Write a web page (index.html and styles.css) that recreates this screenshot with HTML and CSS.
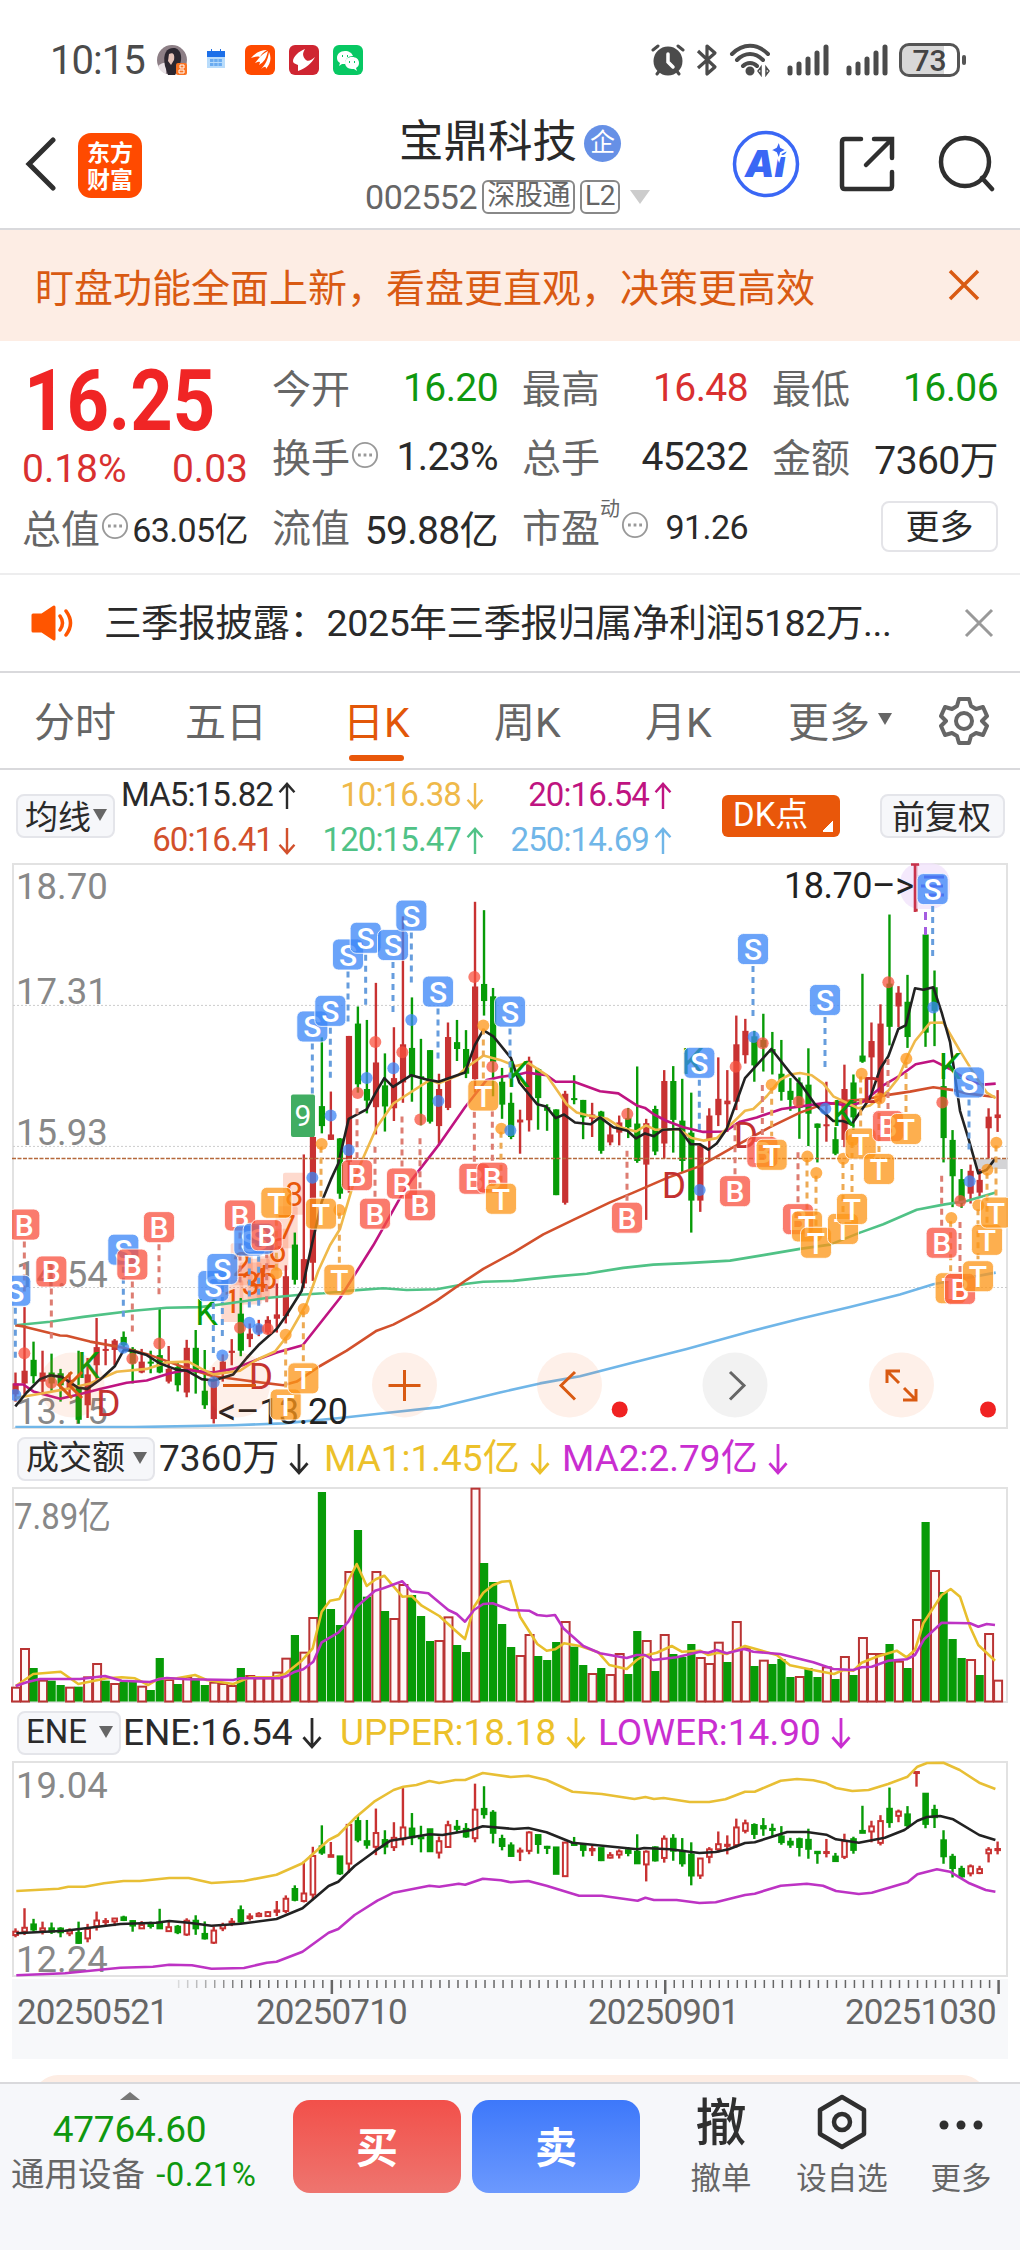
FILE: index.html
```html
<!DOCTYPE html>
<html lang="zh-CN">
  <head>
    <meta charset="UTF-8" />
    <meta name="viewport" content="width=device-width, initial-scale=1.0" />
    <title>宝鼎科技 002552</title>
    <link rel="stylesheet" href="styles.css">
  </head>
  <body>
    <svg class="defs">
      <symbol id="up" viewBox="0 0 20 30"><path d="M10 29V2M2 11l8-9 8 9" /></symbol>
      <symbol id="down" viewBox="0 0 20 30"><path d="M10 1v27M2 19l8 9 8-9" /></symbol>
      <symbol id="more-dots" viewBox="0 0 30 30">
        <circle cx="15" cy="15" r="13" />
        <path d="M7.5 15h3M13.500 15h3M19.500 15h3" stroke-width="3" />
      </symbol>
      <symbol id="signal" viewBox="0 0 42 32">
        <path d="M3 24v5M12 20v9M21 15v14M30 9v20M39 3v26" />
      </symbol>
    </svg>

    <div class="status">
      <span class="clock">10:15</span>
      <svg class="apps" width="212" height="32" viewBox="0 0 212 32">
        <circle cx="16" cy="16" r="15" fill="#8d7f86" />
        <path d="M2 22q5-4 8-3v11q-6-2-8-8z" fill="#e9e2e6" />
        <path d="M9 22C6 8 12 3 19 4c7 2 7 11 5 16l-5 11h-7z" fill="#2c2730" />
        <path d="M13 10c4-2 6 0 5 6l-3 5-3-4z" fill="#e5c3b9" />
        <rect x="20" y="19" width="11" height="12" rx="2" fill="#fa7322" />
        <path d="M24 21h4v3h-4zM23 26h5v3h-5z" fill="none" stroke="#fff" />
        <rect x="51" y="8" width="18" height="16" fill="#b9dcfb" />
        <path d="M51 7h18v6H51zM55 5h1v3h-1zM64 5h1v3h-1z" fill="#1c6fe8" />
        <path d="M54 16.500h12M54 20.500h12" stroke="#6aabf0" stroke-width="3" stroke-dasharray="3.500 .700" />
        <rect x="89" y="1" width="30" height="30" rx="6" fill="#ff4a00" />
        <path d="M95 14c4-5 10-8 16-8-4 2-6 5-7 7-3-1-6 0-9 1zM99 19c4-5 7-9 13-12-2 8-4 11-9 14 2-4 1-4-4-2zM105 25c4-4 7-9 8-17 3 7 1 12-3 17 0-3-1-3-5 0z" fill="#fff" />
        <rect x="133" y="1" width="30" height="30" rx="6" fill="#cf2531" />
        <path d="M149 5c-6 2-12 8-12 12 0 3 4 3 5 4v6c7-2 14-8 17-14-4 4-8 5-10 2s-3-5 0-10z" fill="#fff" />
        <rect x="177" y="1" width="30" height="30" rx="6" fill="#07c863" />
        <path d="M189 7c-5 0-8 3-8 7 0 2 1 4 3 5l-1 3 3-2h3c0-5 3-8 8-8-1-3-4-5-8-5z" fill="#fff" />
        <path d="M196 13c-4 0-7 2-7 6 0 3 3 6 7 6h2l3 2-1-3c2-1 3-3 3-5 0-4-3-6-7-6z" fill="#fff" />
        <path d="M186 12h1M191 12h1M193 18h1M198 18h1" stroke="#07c863" stroke-width="2" />
      </svg>
      <div class="status-right">
        <svg width="34" height="34" viewBox="0 0 34 34" fill="none" stroke="#4b4b4b">
          <circle cx="17" cy="18" r="14.500" fill="#4b4b4b" stroke="none" />
          <path d="M2 7l5-4M32 7l-5-4M6 31l3-4M28 31l-3-4" stroke-width="3" stroke-linecap="round" />
          <path d="M17 11v8l5 5" stroke="#fff" stroke-width="3.500" stroke-linecap="round" />
        </svg>
        <svg width="24" height="34" viewBox="0 0 24 34" fill="none" stroke="#4b4b4b" stroke-width="3.200" stroke-linejoin="round">
          <path d="M3 8l17 16-8 7V3l8 7L3 25" />
        </svg>
        <svg class="wifi" width="42" height="34" viewBox="0 0 42 34" fill="none" stroke="#4b4b4b" stroke-width="4" stroke-linecap="round">
          <path d="M3 11c11-11 25-11 36 0M8 17c8-8 18-8 26 0M14 23c4-4 10-4 14 0" />
          <circle cx="21" cy="28" r="2.500" fill="#4b4b4b" />
          <path d="M32 24v8l-3-4zM37 24v8l3-4z" stroke-width="1.500" />
        </svg>
        <svg class="signal" width="42" height="32"><use href="#signal" /></svg>
        <svg class="signal" width="42" height="32"><use href="#signal" /></svg>
        <span class="battery">73</span>
        <i class="battery-tip"></i>
      </div>
    </div>

    <header class="nav">
      <svg class="back" width="32" height="54" viewBox="0 0 32 54"><path d="M28 3L4 27l24 24" /></svg>
      <div class="logo">东方<br>财富</div>
      <div class="stock">
        <div class="stock-name">宝鼎科技<span class="ent">企</span></div>
        <div class="stock-code"><span>002552</span><b class="w3">深股通</b><b>L2</b><i></i></div>
      </div>
      <div class="nav-icons">
        <svg width="68" height="68" viewBox="0 0 68 68">
          <circle cx="34" cy="34" r="31.500" fill="none" stroke="#3a67f5" stroke-width="3.500" />
          <text x="13" y="46.500" class="ai">Ai</text>
          <path d="M47 10l2 7 6 3-6 3-2 7-3-7-6-3 6-3z" fill="#3a67f5" stroke="#fff" stroke-width="2" />
        </svg>
        <svg class="line-icon" width="56" height="56" viewBox="0 0 56 56">
          <path d="M22 3H6q-3 0-3 3v44q0 3 3 3h44q3 0 3-3V36M35 3h18v19M52 4L27 29" />
        </svg>
        <svg class="line-icon" width="58" height="58" viewBox="0 0 58 58">
          <circle cx="28" cy="27" r="24" /><path d="M45 43l10 11" />
        </svg>
      </div>
    </header>

    <div class="banner">
      <span>盯盘功能全面上新，看盘更直观，决策更高效</span>
      <svg width="34" height="34" viewBox="0 0 34 34"><path d="M3 3l28 28M31 3L3 31" /></svg>
    </div>

    <section class="quote">
      <div class="col first">
        <div class="price"><span>16.25</span></div>
        <div class="row change red"><em>0.18%</em><em>0.03</em></div>
        <div class="row small"><span>总值</span><svg class="dots"><use href="#more-dots" /></svg><em>63.05亿</em></div>
      </div>
      <div class="col">
        <div class="row"><span>今开</span><em class="green">16.20</em></div>
        <div class="row"><span>换手</span><svg class="dots"><use href="#more-dots" /></svg><em>1.23%</em></div>
        <div class="row"><span>流值</span><em>59.88亿</em></div>
      </div>
      <div class="col">
        <div class="row"><span>最高</span><em class="red">16.48</em></div>
        <div class="row"><span>总手</span><em>45232</em></div>
        <div class="row small"><span>市盈</span><sup>动</sup><svg class="dots"><use href="#more-dots" /></svg><em>91.26</em></div>
      </div>
      <div class="col">
        <div class="row"><span>最低</span><em class="green">16.06</em></div>
        <div class="row"><span>金额</span><em>7360万</em></div>
        <div class="row"><button class="more">更多</button></div>
      </div>
    </section>

    <div class="news">
      <svg width="44" height="38" viewBox="0 0 44 38">
        <path d="M2 11h9L23 3v32l-12-8H2z" fill="#ff5500" stroke="#ff5500" stroke-width="3" stroke-linejoin="round" />
        <path d="M29 12q5 7 0 14M35 7q9 12 0 24" fill="none" stroke="#ff5500" stroke-width="3.500" stroke-linecap="round" />
      </svg>
      <span>三季报披露：2025年三季报归属净利润5182万...</span>
      <svg class="close" width="30" height="30" viewBox="0 0 30 30"><path d="M2 2l26 26M28 2L2 28" /></svg>
    </div>

    <nav class="tabs">
      <a>分时</a><a>五日</a><a class="active">日K</a><a>周K</a><a>月K</a><a>更多<i class="tri"></i></a>
      <svg width="50" height="50" viewBox="0 0 50 50">
        <path d="M20 3h10l2 7 5 3 7-2 4 9-5 5 5 5-4 9-7-2-5 3-2 7H20l-2-7-5-3-7 2-4-9 5-5-5-5 4-9 7 2 5-3z" />
        <circle cx="25" cy="25" r="8" />
      </svg>
    </nav>

    <div class="ma-bar">
      <span class="chip">均线<i class="tri"></i></span>
      <div class="ma-grid">
        <span class="c5">MA5:15.82<svg><use href="#up" /></svg></span>
        <span class="c10">10:16.38<svg><use href="#down" /></svg></span>
        <span class="c20">20:16.54<svg><use href="#up" /></svg></span>
        <span class="c60">60:16.41<svg><use href="#down" /></svg></span>
        <span class="c120">120:15.47<svg><use href="#up" /></svg></span>
        <span class="c250">250:14.69<svg><use href="#up" /></svg></span>
      </div>
      <span class="dk">DK点</span>
      <span class="chip fq">前复权</span>
    </div>

    <svg id="kline" width="1020" height="570" viewBox="0 0 1020 570"></svg>

    <div class="ind">
      <span class="chip vol-chip">成交额<i class="tri"></i></span>
      <span class="v1">7360万<svg><use href="#down" /></svg></span>
      <span class="v2 gold">MA1:1.45亿<svg><use href="#down" /></svg></span>
      <span class="v3 purple">MA2:2.79亿<svg><use href="#down" /></svg></span>
    </div>
    <svg id="volume" width="1020" height="217" viewBox="0 0 1020 217"></svg>

    <div class="ind">
      <span class="chip ene-chip">ENE<i class="tri"></i></span>
      <span class="e1">ENE:16.54<svg><use href="#down" /></svg></span>
      <span class="e2 gold">UPPER:18.18<svg><use href="#down" /></svg></span>
      <span class="e3 purple">LOWER:14.90<svg><use href="#down" /></svg></span>
    </div>
    <svg id="ene" width="1020" height="218" viewBox="0 0 1020 218"></svg>

    <div class="axis">
      <svg id="ticks" width="996" height="18" viewBox="12 0 996 18"></svg>
      <div class="dates"><span>20250521</span><span>20250710</span><span>20250901</span><span>20251030</span></div>
    </div>
    <div class="card-edge"><div></div></div>

    <footer class="bottom">
      <div class="index">
        <i></i>
        <div class="index-value">47764.60</div>
        <div class="index-name">通用设备 <em>-0.21%</em></div>
      </div>
      <button class="buy">买</button>
      <button class="sell">卖</button>
      <div class="act a1"><strong>撤</strong><span>撤单</span></div>
      <div class="act a2">
        <svg width="54" height="56" viewBox="0 0 54 56"><path d="M27 3l22 13v24L27 53 5 40V16z" /><circle cx="27" cy="28" r="8" /></svg>
        <span>设自选</span>
      </div>
      <div class="act a3">
        <svg width="54" height="56" viewBox="0 0 54 56"><g class="solid"><circle cx="10" cy="31" r="4.500" /><circle cx="27" cy="31" r="4.500" /><circle cx="44" cy="31" r="4.500" /></g></svg>
        <span>更多</span>
      </div>
    </footer>

    <script src="chart.js"></script>
  </body>
</html>
```
FILE: styles.css
```css
* {
  box-sizing: border-box;
}
body {
  margin: 0;
  width: 1020px;
  height: 2250px;
  overflow: hidden;
  background: #fff;
  color: #2a2a2a;
  font-family: Roboto, "Noto Sans CJK SC", sans-serif;
}
em,
i {
  font-style: normal;
}
button {
  font-family: inherit;
}
.defs {
  display: none;
}
.red {
  color: #d93030;
}
.green {
  color: #0f980f;
}
.gold {
  color: #ecc12a;
}
.purple {
  color: #c92ed0;
}
.tri {
  display: inline-block;
  border: 7px solid transparent;
  border-top: 12px solid #666;
  border-bottom: 0;
}

/* status bar */
.status {
  display: flex;
  align-items: center;
  height: 90px;
  padding: 30px 54px 0 50px;
}
.clock {
  width: 106px;
  font-size: 40px;
  letter-spacing: -1px;
  color: #4b4b4b;
}
.status-right {
  display: flex;
  align-items: center;
  margin-left: auto;
}
.status-right svg {
  margin-right: 10px;
}
.status-right .wifi {
  margin-right: 16px;
}
.status-right .signal {
  margin-right: 17px;
  stroke: #4b4b4b;
  stroke-width: 5;
  stroke-linecap: round;
}
.status-right .signal + .battery {
  margin-left: -6px;
}
.battery {
  width: 61px;
  height: 34px;
  border: 3px solid #555;
  border-radius: 10px;
  background: linear-gradient(90deg, #d8d8d8 76%, #fff 76%);
  background-clip: padding-box;
  font-size: 30px;
  line-height: 29px;
  text-align: center;
  font-weight: 500;
  color: #444;
}
.battery-tip {
  width: 4px;
  height: 10px;
  margin-left: 2px;
  border-radius: 2px;
  background: #555;
}

/* title bar */
.nav {
  display: flex;
  align-items: center;
  height: 140px;
  padding: 10px 25px 0;
  border-bottom: 2px solid #d9d9dc;
  justify-content: space-between;
}
.back {
  fill: none;
  stroke: #2f2f2f;
  stroke-width: 5;
  stroke-linecap: round;
}
.logo {
  width: 64px;
  height: 65px;
  margin: 3px 218px 0 21px;
  padding-top: 5px;
  border-radius: 13px;
  background: #ff4a00;
  color: #fff;
  font: 700 23px/27px "Noto Sans CJK SC", sans-serif;
  text-align: center;
}
.stock {
  width: 300px;
  text-align: center;
}
.stock-name {
  height: 60px;
  margin-top: -2px;
  font-size: 44.5px;
  line-height: 60px;
  white-space: nowrap;
}
.ent {
  display: inline-block;
  width: 37px;
  height: 37px;
  margin-left: 7px;
  border-radius: 50%;
  background: #6690e6;
  color: #fff;
  font-size: 25px;
  line-height: 36px;
  vertical-align: 6px;
}
.stock-code {
  display: flex;
  align-items: center;
  height: 36px;
  margin: 7px 0 0 5px;
  font-size: 34px;
  letter-spacing: -0.4px;
  color: #666;
}
.stock-code b {
  height: 34px;
  margin-left: 5px;
  padding: 0 3px;
  border: 2px solid #888;
  border-radius: 6px;
  font-size: 28px;
  font-weight: 400;
  line-height: 28px;
}
.stock-code i {
  margin-left: 10px;
  border: 10px solid transparent;
  border-top: 14px solid #ccc;
  border-bottom: 0;
}
.nav-icons {
  display: flex;
  align-items: center;
  gap: 39px;
  margin-left: auto;
}
.nav-icons svg + svg + svg {
  margin-left: 3px;
}
.ai {
  font: italic 900 37px Inter, Roboto, sans-serif;
  fill: #3a67f5;
}
.line-icon {
  fill: none;
  stroke: #2f2f2f;
  stroke-width: 4.5;
  stroke-linecap: round;
}

.banner {
  display: flex;
  align-items: center;
  justify-content: space-between;
  height: 111px;
  padding: 0 39px 2px 35px;
  background: #fdede4;
  color: #d95a12;
  font-size: 39px;
}
.banner svg {
  stroke: #d95a12;
  stroke-width: 3.5;
}

/* price block */
.quote {
  display: grid;
  grid-template-columns: 226px 226px 226px 226px;
  gap: 24px;
  height: 234px;
  padding: 12px 0 0 22px;
  border-bottom: 2px solid #ededee;
}
.row {
  display: flex;
  align-items: center;
  justify-content: space-between;
  height: 69.5px;
  font-size: 39px;
  white-space: nowrap;
}
.row em {
  margin-left: auto;
  letter-spacing: -0.6px;
}
.row > span {
  color: #666;
  margin-top: -4px;
}
.row.small em {
  font-size: 34px;
}
.price {
  height: 91px;
  color: #f02525;
  font-size: 86px;
  line-height: 96px;
  font-weight: 700;
}
.price span {
  display: inline-block;
  margin-left: 2px;
  transform: scaleX(0.86);
  transform-origin: 0 50%;
}
.price + .row {
  height: 50px;
}
.price + .row + .row {
  height: 67px;
}
.row.change em:first-child {
  margin-left: 0;
}
.row.change em {
  letter-spacing: 0;
}
.dots {
  width: 28px;
  height: 28px;
  margin: -4px 0 0 1px;
  fill: none;
  stroke: #999;
  stroke-width: 2;
}
.row sup {
  align-self: flex-start;
  margin-top: 3px;
  font-size: 20px;
  line-height: 28px;
  color: #666;
}
.row sup + .dots {
  margin-left: 1px;
}
.more {
  width: 117px;
  height: 51px;
  margin-left: auto;
  border: 2px solid #e4e4e8;
  border-radius: 8px;
  background: #fff;
  color: #2a2a2a;
  font-size: 34px;
  line-height: 44px;
  padding: 0;
}

.news {
  display: flex;
  align-items: center;
  height: 98px;
  padding: 0 26px 0 31px;
  border-bottom: 2px solid #d9d9dc;
  font-size: 37.5px;
  white-space: nowrap;
}
.news span {
  margin: -7px 0 0 29px;
  letter-spacing: -0.4px;
}
.close {
  margin-left: auto;
  stroke: #999;
  stroke-width: 3;
}

.tabs {
  display: grid;
  grid-template-columns: 151px 158px 151px 151px 143px 170px 60px;
  align-items: center;
  height: 97px;
  padding: 0 0 0 34px;
  border-bottom: 2px solid #d9d9dc;
  color: #666;
  font-size: 41px;
}
.tabs a {
  display: flex;
  align-items: center;
  height: 95px;
  padding-bottom: 3px;
  position: relative;
}
.tabs .active {
  color: #e25709;
}
.tabs .active::after {
  content: "";
  position: absolute;
  left: 6px;
  bottom: 7px;
  width: 55px;
  height: 6px;
  border-radius: 3px;
  background: #e9570a;
}
.tabs .tri {
  margin-left: 8px;
}
.tabs svg {
  margin-left: -19px;
  fill: none;
  stroke: #666;
  stroke-width: 4;
  stroke-linejoin: round;
}

.chip {
  display: inline-flex;
  align-items: center;
  justify-content: space-between;
  height: 44px;
  border: 2px solid #e4e5ea;
  border-radius: 8px;
  background: #f6f7fa;
  font-size: 33px;
  padding: 0 6px 2px 7px;
  white-space: nowrap;
}
.ma-bar {
  display: flex;
  height: 90px;
  padding: 0 0 0 16px;
}
.ma-bar .chip {
  width: 99px;
  margin-top: 24px;
}
.ma-grid {
  display: grid;
  grid-template-columns: 182px 188px 188px;
  grid-auto-rows: 45px;
  width: 558px;
  text-align: right;
  font-size: 33px;
  line-height: 49px;
  letter-spacing: -0.9px;
}
.ma-grid svg,
.ind svg {
  width: 20px;
  height: 28px;
  margin-left: 4px;
  vertical-align: -4px;
  fill: none;
  stroke: currentColor;
  stroke-width: 2.6;
}
.c10 { color: #efb94a; }
.c20 { color: #bf1481; }
.c60 { color: #d2502c; }
.c120 { color: #50c286; }
.c250 { color: #70b6e8; }
.dk {
  width: 118px;
  height: 42px;
  margin: 25px 0 0 49px;
  padding-left: 11px;
  border-radius: 6px;
  background: linear-gradient(135deg, transparent 50%, #fff 50%) 101px 25px / 10px 12px no-repeat #e9570a;
  color: #fff;
  font-size: 33px;
  line-height: 40px;
}
.ma-bar .fq {
  width: 125px;
  margin-left: 40px;
  padding: 0 10px 2px;
}

#kline,
#volume,
#ene {
  display: block;
}
#kline text {
  font-family: Roboto, sans-serif;
}
#kline .badge {
  font-weight: 500;
  font-size: 30px;
  fill: #fff;
  text-anchor: middle;
}
.label {
  font: 36.5px Roboto, "Noto Sans CJK SC", sans-serif;
  fill: #888;
}
.frame {
  fill: none;
  stroke: #e2e2e2;
  stroke-width: 2;
}

.ind {
  display: flex;
  height: 57px;
  padding: 7px 0 0 17px;
  font-size: 37px;
  line-height: 44px;
  white-space: nowrap;
}
.ind svg {
  height: 32px;
  width: 22px;
  margin-left: 9px;
}
.vol-chip {
  width: 138px;
}
.ene-chip {
  width: 104px;
}
.v1 { width: 169px; padding-left: 4px; }
.v2 { width: 238px; }
.e1 { width: 219px; padding-left: 2px; letter-spacing: -0.1px; }
.e2 { width: 258px; }

.axis {
  width: 996px;
  height: 80px;
  margin: 0 12px;
  background: #f7f8fa;
}
.axis svg {
  display: block;
}
.dates {
  display: grid;
  grid-template-columns: 239px 332px 257px 160px;
  padding: 0 0 0 5px;
  color: #666;
  font-size: 35px;
  line-height: 32px;
  letter-spacing: -0.8px;
}
.card-edge {
  height: 23px;
  padding: 16px 33px 0;
  overflow: hidden;
}
.card-edge div {
  height: 50px;
  border-radius: 25px;
  background: #fdede4;
}

.bottom {
  display: flex;
  height: 168px;
  border-top: 2px solid #d9d9dc;
  background: #f6f7fa;
}
.index {
  width: 282px;
  padding-left: 11px;
}
.index i {
  display: block;
  width: 0;
  margin: 8px 0 0 109px;
  border: 10px solid transparent;
  border-bottom: 8px solid #777;
  border-top: 0;
}
.index-value {
  width: 237px;
  height: 58px;
  color: #0f980f;
  font-size: 37px;
  line-height: 60px;
  letter-spacing: -0.2px;
  text-align: center;
}
.index-name {
  color: #666;
  font-size: 33.5px;
  line-height: 34px;
  white-space: nowrap;
}
.index-name em {
  margin-left: 3px;
  color: #0f980f;
  font-size: 33px;
  letter-spacing: 0.4px;
}
.buy,
.sell {
  width: 168px;
  height: 93px;
  margin: 16px 0 0 11px;
  padding: 0;
  border: 0;
  border-radius: 17px;
  background: linear-gradient(#f2504a, #ee756f);
  color: #fff;
  font-size: 42px;
  font-weight: 700;
}
.buy,
.sell {
  padding-bottom: 4px;
}
.sell {
  background: linear-gradient(#3d78fa, #6c99fe);
}
.act {
  display: flex;
  flex-direction: column;
  align-items: center;
  padding-top: 10px;
  color: #666;
  font-size: 30.5px;
}
.act strong {
  height: 60px;
  color: #2f2f2f;
  font-size: 51px;
  font-weight: 500;
  line-height: 60px;
}
.act span {
  line-height: 50px;
}
.act svg {
  height: 56px;
  margin-bottom: 4px;
  fill: none;
  stroke: #2f2f2f;
  stroke-width: 4.5;
  stroke-linejoin: round;
}
.act .solid {
  fill: #2f2f2f;
  stroke: none;
}
.a1 { width: 100px; margin-left: 31px; }
.a2 { width: 120px; margin-left: 11px; }
.a3 { width: 100px; margin-left: 9px; }
```
FILE: chart.js
```js
const RED = '#c83232';
const GREEN = '#079b07';
// series are stored on the chart's own grid: 3 units per px across, 2.751 down
const SX = 3;
const SY = 2.751;
const STEP = 9.01;
const xAt = (i) => 15.5 + STEP * i;

// colour, high, body top, body bottom, low
const candles = `
r 1410 1440 1470 1490|r 1230 1405 1440 1470|g 1325 1375 1420 1440|r 1350 1410 1435 1465|g 1358 1410 1440 1460
g 1400 1412 1445 1490|r 1410 1430 1455 1480|g 1350 1452 1540 1550|r 1370 1415 1500 1535|r 1260 1340 1390 1430
r 1318 1345 1350 1390|r 1318 1322 1348 1390|g 1297 1312 1335 1345|g 1340 1345 1385 1440|r 1345 1380 1410 1412
g 1350 1380 1385 1412|g 1235 1362 1410 1412|r 1337 1400 1435 1440|g 1380 1395 1445 1462|r 1320 1342 1465 1478
g 1293 1342 1410 1468|g 1348 1460 1500 1510|r 1395 1430 1538 1550|r 1360 1380 1410 1435|r 1318 1350 1356 1390
g 1205 1248 1350 1365|r 1275 1303 1318 1340|r 1265 1280 1300 1310|r 1255 1265 1300 1305|r 1165 1250 1262 1300
r 1115 1145 1255 1275|g 1025 1058 1155 1168|r 810 1098 1165 1178|r 680 762 1108 1158|g 488 677 732 752
r 637 755 770 770|g 765 766 918 932|r 484 484 830 915|g 403 450 617 640|g 440 630 662 697
r 338 557 680 755|g 532 620 678 747|r 460 600 683 718|r 155 507 612 668|g 378 517 595 665
g 492 595 600 730|g 523 523 720 725|r 588 630 732 785|r 447 487 682 688|g 440 501 520 553
g 468 520 588 600|r 115 348 603 640|g 138 341 388 428|g 352 375 555 650|g 572 610 673 712
g 640 668 762 768|r 687 714 722 808|r 541 552 716 747|g 572 575 655 742|g 672 680 690 745
g 686 686 922 922|r 635 643 943 948|g 592 655 660 672|g 660 660 708 768|r 668 700 712 762
g 690 692 800 808|r 728 755 777 785|r 703 722 750 785|g 682 710 735 765|g 568 725 828 833
r 712 724 838 990|g 676 685 802 812|r 578 608 780 822|g 567 608 715 805|g 602 717 828 858
g 640 750 937 1025|r 780 785 937 968|r 683 703 770 828|r 543 657 702 732|r 578 662 672 748
r 428 507 665 688|r 437 470 537 560|g 470 485 565 610|g 423 495 515 582|g 473 520 530 590
g 495 588 638 662|g 600 635 660 690|g 598 612 682 767|g 518 618 698 787|g 725 725 737 832
r 610 727 730 775|g 735 768 808 812|r 563 630 770 790|g 590 612 708 742|g 313 538 555 558
r 447 498 543 640|r 397 450 645 668|g 150 340 459 510|r 347 365 403 460|g 316 390 487 517
r 11 11 14 142|g 205 205 475 514|g 304 350 415 512|g 532 622 765 832|g 743 770 870 955
g 850 878 945 957|r 838 855 918 945|r 850 880 915 925|r 683 706 738 820|r 633 700 710 748`
  .trim().split(/[|\n]/).map((c) => {
    const [color, ...v] = c.split(' ');
    return { color, v: v.map(Number) };
  });

const maLines = {
  '#70b6e8': '46,1560 400,1560 700,1555 850,1550 1020,1535 1150,1522 1320,1505 1500,1465 1620,1440 1740,1420 1900,1382 2060,1345 2250,1297 2400,1262 2550,1230 2700,1195 2800,1167 2987,1135',
  '#50c286': '46,1280 150,1270 250,1257 400,1240 500,1232 600,1230 700,1218 800,1205 900,1196 970,1192 1060,1184 1150,1178 1220,1183 1310,1181 1400,1166 1450,1160 1540,1158 1660,1146 1760,1138 1870,1122 1960,1113 2060,1109 2190,1102 2290,1087 2400,1070 2490,1058 2580,1025 2650,1002 2750,962 2830,948 2900,938 2987,915',
  '#d2502c': '46,1280 70,1283 180,1308 200,1309 270,1325 360,1340 450,1362 560,1398 640,1420 720,1430 850,1445 890,1435 960,1392 1040,1350 1130,1295 1180,1278 1260,1240 1310,1212 1400,1155 1450,1125 1540,1080 1630,1030 1720,990 1830,942 1900,915 2000,875 2100,842 2200,790 2310,735 2400,695 2460,675 2550,662 2600,658 2650,648 2730,637 2800,625 2860,633 2900,642 2985,652',
  '#bf1481': '40,1443 70,1443 100,1462 180,1482 230,1472 300,1455 380,1438 440,1432 510,1412 560,1403 640,1410 700,1400 770,1375 830,1355 908,1335 1020,1205 1120,1060 1200,930 1235,880 1315,785 1395,680 1425,645 1460,605 1500,597 1555,590 1580,585 1640,592 1667,610 1722,610 1800,636 1855,642 1910,675 1935,682 1962,700 2000,718 2050,735 2110,748 2175,747 2220,720 2270,708 2345,685 2440,673 2480,668 2550,676 2590,665 2650,620 2705,590 2747,562 2800,552 2850,575 2910,610 2950,618 2987,615',
  '#efb94a': '46,1480 130,1467 200,1455 270,1440 350,1408 440,1400 500,1382 565,1380 605,1400 640,1415 720,1405 770,1375 825,1352 870,1300 920,1220 955,1130 990,1060 1020,1015 1070,860 1130,735 1180,670 1290,605 1316,614 1375,592 1400,570 1450,538 1500,550 1548,567 1585,558 1640,592 1700,672 1730,695 1765,703 1822,712 1860,735 1908,747 1938,730 1965,742 2035,740 2075,765 2110,772 2150,765 2190,730 2235,690 2260,685 2300,650 2340,605 2370,590 2400,586 2435,592 2470,615 2500,650 2575,683 2610,675 2665,635 2695,600 2725,535 2745,498 2790,448 2830,447 2880,525 2930,600 2960,640 2987,655',
  '#222': '46,1503 80,1465 120,1428 150,1418 185,1422 235,1452 262,1455 300,1430 345,1392 371,1348 395,1350 440,1362 480,1385 530,1402 560,1405 605,1428 640,1432 700,1415 740,1370 775,1335 830,1290 857,1255 905,1185 935,1060 965,940 992,880 1015,835 1046,712 1100,686 1127,640 1153,600 1179,624 1234,592 1285,605 1316,610 1395,585 1424,510 1450,468 1480,485 1533,545 1558,612 1612,672 1638,678 1667,710 1692,700 1725,722 1772,727 1800,708 1840,735 1882,745 1908,766 1935,752 1962,760 1988,742 2038,740 2072,782 2100,782 2125,797 2150,780 2180,740 2235,600 2314,520 2370,585 2405,620 2445,672 2500,718 2528,718 2555,727 2610,655 2640,575 2665,540 2695,465 2717,455 2745,353 2770,357 2800,350 2825,420 2850,500 2880,690 2905,765 2935,862 2960,852 2987,820',
};

// type, x, y of the badge, side its dashed line leaves from
const badges = `S 46 1185 d|B 73 1003 d|B 154 1132 d|S 370 1072 d|B 397 1113 d|B 477 1010 d|S 640 1172 d|S 667 1125 d
B 720 978 d|S 748 1047 d|S 776 1042 d|B 800 1032 d|T 829 943 d|T 857 1498 u|T 910 1426 u|T 963 973 u|T 1018 1155 u
S 937 458 d|S 991 415 d|S 1044 260 d|S 1097 214 d|S 1179 234 d|S 1234 153 d|S 1314 362 d|S 1530 417 d|B 1071 867 u
B 1125 973 u|B 1206 890 u|B 1260 950 u|B 1423 877 u|B 1477 874 u|T 1450 648 u|T 1503 932 u|B 1881 984 u|S 2098 558 d
S 2259 245 d|S 2475 385 d|S 2798 80 d|S 2907 612 d|B 2205 911 u|B 2287 803 u|T 2315 811 u|B 2394 988 u|T 2421 1008 u
T 2448 1053 u|T 2529 1015 u|T 2556 960 u|T 2582 780 u|T 2637 850 u|B 2664 732 u|T 2718 740 u|B 2825 1053 u|T 2852 1178 u
B 2880 1180 u|T 2934 1145 u|T 2961 1045 u|T 2988 970 u`.split(/[|\n]/).map((b) => b.split(' '));

const dots = `S 46 1472|B 73 1357|B 154 1438|S 370 1342|B 397 1372|B 478 1330|S 641 1437|S 667 1363|B 720 1287|S 748 1273
S 775 1290|B 803 1290|T 829 1137|T 857 1306|T 911 1235|T 1018 963|T 965 781|S 937 874|S 992 703|S 1046 798|B 1073 641
S 1100 600|B 1126 501|S 1180 573|B 1207 529|S 1234 440|B 1261 714|S 1315 663|B 1423 322|T 1450 455|B 1477 569|T 1504 739
S 1531 744|B 1882 699|S 2099 908|B 2207 569|S 2261 487|B 2288 504|T 2315 618|B 2396 665|T 2422 816|T 2449 861|S 2476 684
T 2530 822|T 2585 588|T 2558 770|T 2639 656|B 2665 336|T 2719 547|S 2800 406|B 2827 667|T 2854 985|B 2881 938|S 2909 884
T 2935 950|T 2962 852|T 2989 778`.split(/[|\n]/).map((d) => d.split(' '));

const badgeFill = { S: '#3b86f7', B: '#f8523f', T: '#fd9618' };
const lineFill = { S: '#669ddd', B: '#dd7d72', T: '#edaa54' };

function polyline(points, color, sx, sy, dy = 0, width = 2.6) {
  const p = points.split(' ').map((pt) => {
    const [x, y] = pt.split(',');
    return `${(x / sx).toFixed(1)},${(y / sy + dy).toFixed(1)}`;
  });
  return `<polyline points="${p.join(' ')}" fill="none" stroke="${color}" stroke-width="${width}" stroke-linejoin="round"/>`;
}

function text(x, y, str, fill, size = 36, extra = '') {
  return `<text x="${x}" y="${y}" fill="${fill}" font-size="${size}" ${extra}>${str}</text>`;
}

function drawKline() {
  let s = '<clipPath id="kc"><rect x="12" y="3" width="996" height="565"/></clipPath>';
  s += '<rect class="frame" x="13" y="4" width="994" height="564"/>';
  for (const y of [145.4, 286.4, 427.5]) {
    s += `<path d="M13 ${y}H1007" stroke="#ccc" stroke-dasharray="2 2"/>`;
  }
  s += '<rect x="976" y="299" width="31" height="10" fill="#d4d4d6"/>';
  [['18.70', 39], ['17.31', 144], ['15.93', 285], ['14.54', 427], ['13.15', 564]].forEach(([t, y]) => {
    s += `<text class="label" x="16" y="${y}">${t}</text>`;
  });

  // nine-turn counters
  [[697, 1213, 1], [725, 1112, 2], [752, 1165, 3], [776, 1155, 4], [803, 1148, 5], [832, 1072, 6], [860, 1010, 7], [882, 918, 8]].forEach(([x, y, n]) => {
    s += `<rect x="${x / SX - 11}" y="${y / SY - 21}" width="22" height="42" rx="2" fill="#f9581f" opacity=".22"/>`;
    s += text(x / SX, y / SY + 12, n, '#e9570a', 33, 'text-anchor="middle"');
  });

  s += '<g clip-path="url(#kc)">';
  candles.forEach(({ color, v }, i) => {
    const [h, t, b, l] = v.map((n) => n / SY);
    const c = color === 'r' ? RED : GREEN;
    s += `<path d="M${xAt(i)} ${h}V${l}" stroke="${c}" stroke-width="2.400"/>`;
    s += `<rect x="${xAt(i) - 3}" y="${t}" width="6.200" height="${Math.max(b - t, 2)}" fill="${c}"/>`;
  });
  for (const color in maLines) s += polyline(maLines[color], color, SX, SY);

  [['K', 620, 1243], ['K', 266, 1388], ['K', 1554, 590], ['K', 2078, 552], ['K', 2530, 697], ['K', 2850, 567]].forEach(([t, x, y]) => {
    s += text(x / SX, y / SY + 13, t, GREEN, 36, 'text-anchor="middle"');
  });
  [[325, 1495], [783, 1420], [2022, 893], [2238, 757], [2622, 633]].forEach(([x, y]) => {
    s += text(x / SX, y / SY + 13, 'D', '#c23030', 37, 'text-anchor="middle"');
  });
  s += text(218, 564, '&lt;–13.20', '#222', 36, 'textLength="130"');
  s += '<path d="M12 298.500H1008" stroke="#b5683b" stroke-width="1.300" stroke-dasharray="4 1.500"/>';
  s += '<rect x="900" y="3" width="50" height="46" rx="20" fill="#f1e4fb" opacity=".8"/>';
  s += '<path d="M915 4V52M911 4.500h8" stroke="#c8324b" stroke-width="2.600"/>';
  s += '<path d="M925.500 52v24" stroke="#a45ce0" stroke-width="3" stroke-dasharray="8 7"/>';
  s += '<path d="M924 17h20M921 26h22M924 35h20" stroke="#7a3fe0" stroke-width="3"/>';
  s += text(784, 38, '18.70–&gt;', '#222', 36, 'textLength="130"');

  s += '<rect x="291" y="234.500" width="24" height="42.500" rx="2" fill="#41ad62"/>';
  s += text(303, 266, '9', '#fff', 30, 'text-anchor="middle"');

  badges.forEach(([type, bx, by, dir]) => {
    const x = bx / SX;
    const y = by / SY;
    const y1 = dir === 'd' ? y + 17 : y - 17;
    const y2 = dir === 'd' ? y + 71 : y - 71;
    s += `<path d="M${x} ${y1}V${y2}" stroke="${lineFill[type]}" stroke-width="3" stroke-dasharray="6 5"/>`;
  });
  dots.forEach(([type, x, y]) => {
    s += `<circle cx="${x / SX}" cy="${y / SY}" r="6" fill="${badgeFill[type]}" opacity=".75"/>`;
  });
  badges.forEach(([type, bx, by]) => {
    const x = bx / SX;
    const y = by / SY;
    s += `<rect x="${x - 15.5}" y="${y - 15.5}" width="31" height="31" rx="6" fill="${badgeFill[type]}" fill-opacity=".76" stroke="#fff" stroke-opacity=".8"/>`;
    s += `<text class="badge" x="${x}" y="${y + 11}">${type}</text>`;
  });
  s += '</g>';

  // zoom and pan controls
  [72, 237.5, 404.5, 569.5, 735, 901.5].forEach((x) => {
    s += `<circle cx="${x}" cy="525" r="32.500" fill="${x === 735 ? '#999' : '#f9682a'}" opacity="${x === 735 ? 0.13 : 0.1}"/>`;
  });
  s += `<g fill="none" stroke="#d95a12" stroke-width="3">
    <path d="M72 512L59 525l13 13M82 512L69 525l13 13M223 525.500h33M388.500 525.500h32M404.500 510v31M575 512L561 525.500l14 14"/>
    <path d="M887 523v-12h13M888 512l11 11M916 529v11h-13M915 539l-11-11"/>
    <path d="M730 512l14 13.500-14 14" stroke="#666"/></g>`;
  s += '<circle cx="619.700" cy="549.500" r="8" fill="#f02222"/><circle cx="988" cy="549.500" r="8" fill="#f02222"/>';
  document.querySelector('#kline').innerHTML = s;
}

const volume = `r773 r657 g714 r752 g752 g765 r773 g770 r742 r702 g752 r762 g755 g755 r770 g780 g684 r750 g762 r742 g745 g765
r758 r762 r768 g714 r738 r745 r745 r728 r686 g615 r668 r564 g186 g537 g585 r426 g300 g500 r426 g543 r567 r465 g495 g558
g633 r633 r562 g645 g666 r176 g399 g456 g582 g651 r678 r615 g678 g690 g636 r576 g650 g705 r732 g714 r735 r672 g732 g603
r633 g723 r615 g672 g681 g642 r684 r702 r638 g696 r576 r655 g708 r692 g702 g687 g741 r741 g714 g741 r712 g747 r681 g735
r624 r672 r672 g642 r695 g714 r570 g276 r423 g486 g627 g684 r690 g735 r612 r752`.split(/\s+/);

const volGold = '47,768 100,732 182,725 235,762 320,745 365,742 405,745 445,765 475,747 530,745 585,735 620,750 700,762 750,742 820,742 855,732 905,692 938,655 965,545 990,512 1018,507 1070,402 1100,468 1127,448 1153,437 1207,500 1235,498 1265,527 1318,558 1370,605 1395,627 1422,530 1450,488 1478,466 1505,455 1530,453 1560,560 1612,642 1640,662 1665,658 1692,640 1740,648 1795,667 1828,705 1880,717 1910,690 1930,678 1970,668 2015,648 2045,665 2100,662 2125,675 2155,668 2180,672 2235,648 2270,658 2330,675 2370,706 2450,722 2502,732 2530,720 2560,722 2585,698 2630,680 2690,662 2720,682 2745,660 2770,580 2825,495 2852,477 2880,500 2910,590 2935,645 2985,692';
const volPurple = '47,768 80,757 120,747 240,747 315,738 365,752 450,756 480,747 500,744 560,748 700,750 720,745 840,745 860,738 885,725 910,718 940,695 965,637 1015,608 1045,575 1070,530 1125,482 1150,475 1207,454 1235,484 1285,490 1345,540 1370,552 1395,575 1422,540 1450,522 1478,520 1530,540 1587,542 1612,555 1640,558 1665,555 1690,595 1750,648 1800,670 1880,684 1910,675 1935,675 1960,690 2030,682 2100,665 2125,668 2150,660 2180,670 2232,657 2260,665 2340,672 2440,697 2500,717 2560,720 2585,712 2615,710 2665,692 2720,688 2745,675 2772,628 2825,578 2910,580 2935,590 2960,582 2985,585';

function drawVolume() {
  const off = -57;
  let s = '<rect class="frame" x="13" y="1" width="994" height="214"/>';
  s += '<text class="label" x="14" y="42" textLength="97" lengthAdjust="spacingAndGlyphs">7.89亿</text>';
  volume.forEach((d, i) => {
    const y = d.slice(1) / 3 + off;
    const h = 214.5 - y;
    s += d[0] === 'r'
      ? `<rect x="${xAt(i) - 3.5}" y="${y}" width="8" height="${h}" fill="#fff8f8" stroke="#b93434" stroke-width="2"/>`
      : `<rect x="${xAt(i) - 4}" y="${y}" width="8.200" height="${h}" fill="#079b07"/>`;
  });
  s += polyline(volGold, '#e8bf2c', 3, 3, off);
  s += polyline(volPurple, '#bd33c4', 3, 3, off);
  document.querySelector('#volume').innerHTML = s;
}

const eneLines = {
  '#e8bf35': '25,453 90,446 105,440 130,440 160,430 190,423 215,423 260,414 290,414 325,429 375,423 425,404 465,370 505,300 520,285 545,235 575,185 605,150 620,140 640,135 660,123 675,129 700,120 715,120 742,99 785,111 812,107 840,120 880,155 925,162 975,177 992,171 1005,177 1020,174 1060,186 1090,186 1115,178 1145,155 1160,155 1200,122 1225,117 1250,121 1270,130 1285,144 1310,153 1335,150 1365,132 1395,110 1410,80 1425,69 1450,68 1475,90 1505,128 1530,147',
  '#222': '25,580 100,572 185,552 240,548 260,543 290,548 325,557 370,551 425,537 465,505 505,438 520,425 545,378 575,335 600,302 660,283 680,285 725,270 742,259 790,267 812,264 840,277 880,308 980,328 990,324 1030,328 1075,339 1100,336 1120,328 1145,309 1160,307 1210,276 1240,276 1270,284 1285,298 1320,308 1360,293 1390,270 1410,242 1425,231 1445,228 1465,238 1505,285 1530,300',
  '#bd33c4': '25,706 100,700 185,683 235,680 260,674 295,676 325,686 375,684 410,668 425,665 465,635 505,578 520,567 545,525 580,482 605,458 660,437 675,440 705,431 715,434 742,416 770,421 785,427 812,423 840,437 890,467 925,467 980,482 992,473 1005,480 1040,480 1075,489 1100,487 1145,465 1160,461 1200,437 1240,431 1265,437 1285,453 1320,462 1340,458 1395,427 1410,403 1440,388 1460,395 1490,430 1515,450 1530,455',
};

function drawEne() {
  const off = -21;
  let s = '<rect class="frame" x="13" y="1" width="994" height="214"/>';
  s += '<text class="label" x="16" y="37">19.04</text><text class="label" x="16" y="211">12.24</text>';
  candles.forEach(({ color, v }, i) => {
    const [h, t, b, l] = v.map((n) => (140 + (n - 142) * 0.3352) / 3 + off);
    const c = color === 'r' ? RED : GREEN;
    const fill = color === 'r' ? '#fff' : c;
    s += `<path d="M${xAt(i)} ${h}V${l}" stroke="${c}" stroke-width="2.400"/>`;
    s += `<rect x="${xAt(i) - 2.2}" y="${t}" width="4.600" height="${Math.max(b - t, 1)}" fill="${fill}" stroke="${c}" stroke-width="2"/>`;
  });
  for (const color in eneLines) s += polyline(eneLines[color], color, 1.537, 3, off);
  document.querySelector('#ene').innerHTML = s;
}

function drawTicks() {
  let s = '';
  for (let i = 18; i < 110; i++) {
    const x = 16.5 + STEP * i;
    const major = i === 35 || i === 72 || i === 109;
    const fade = Math.min(1, (i - 16) / 10);
    s += `<path d="M${x} 1v${major ? 14 : 8}" stroke="#666" stroke-width="${major ? 2.5 : 1.5}" opacity="${fade}"/>`;
  }
  document.querySelector('#ticks').innerHTML = s;
}

drawKline();
drawVolume();
drawEne();
drawTicks();
```
